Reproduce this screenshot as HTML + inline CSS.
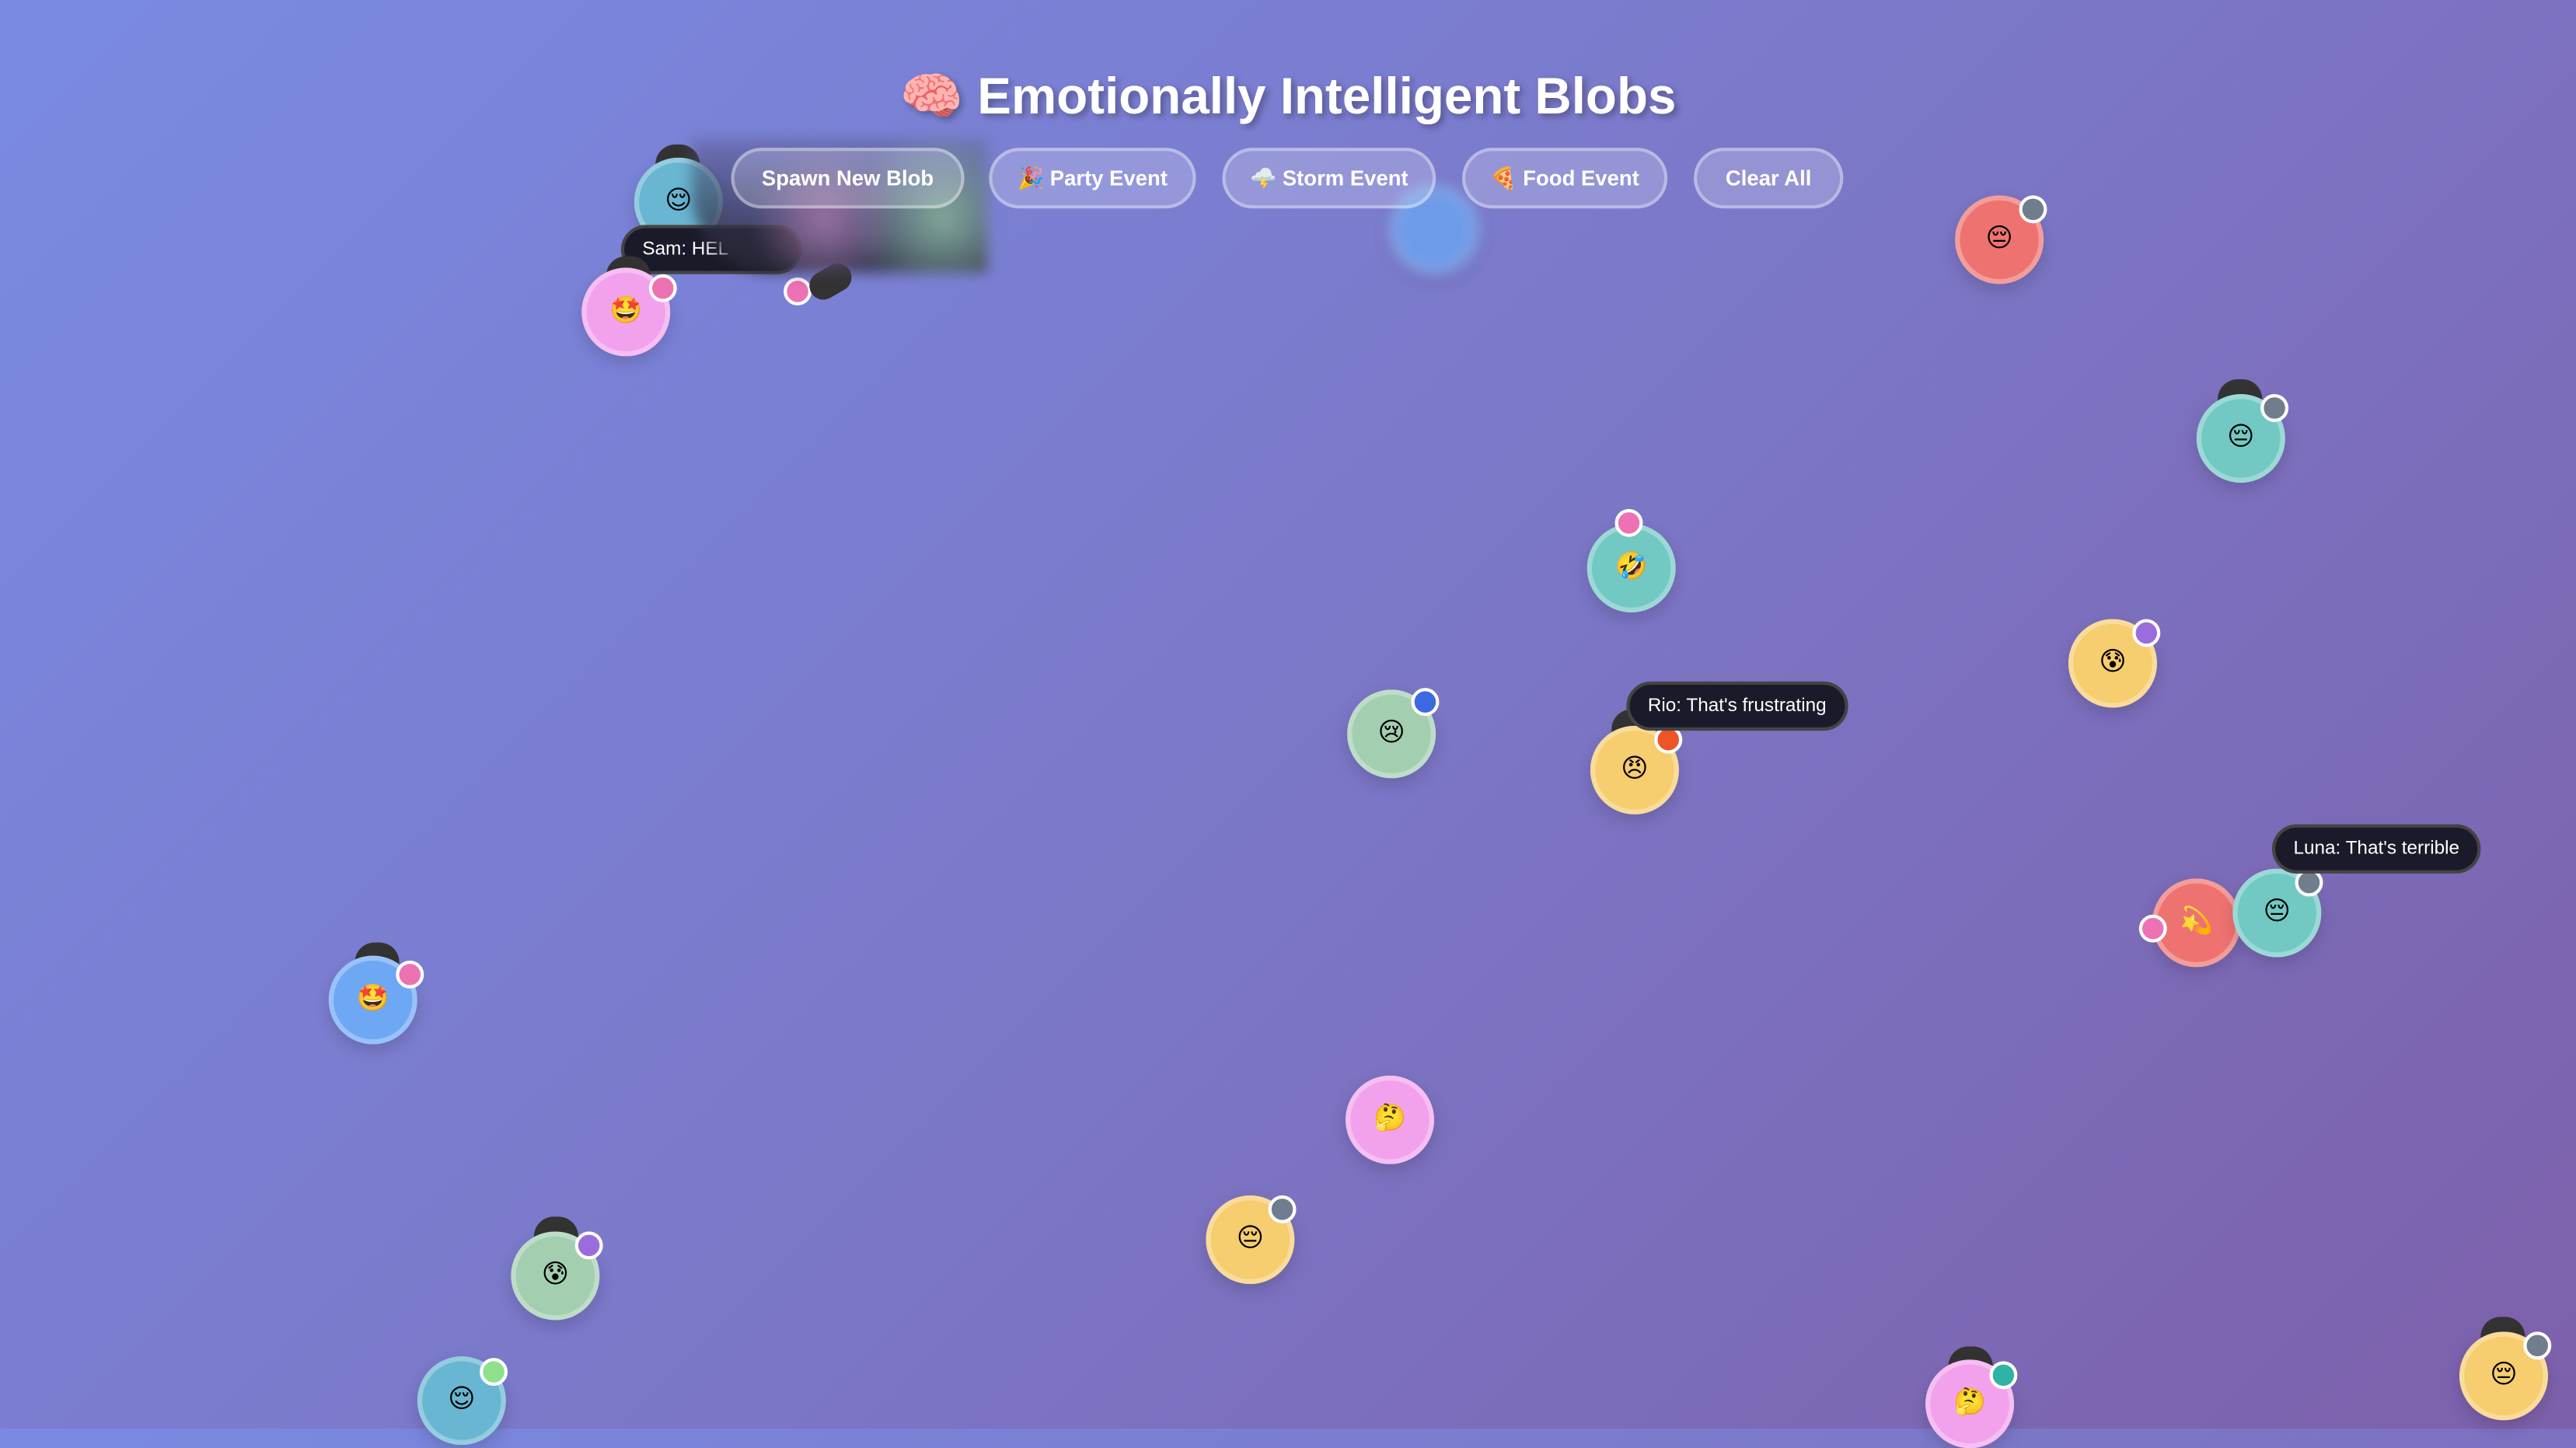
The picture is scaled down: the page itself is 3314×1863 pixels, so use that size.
<!DOCTYPE html>
<html><head><meta charset="utf-8"><style>
html,body{margin:0;padding:0;width:100%;height:100%;overflow:hidden}
html{background:linear-gradient(135deg,#7a8ae3 0%,#7b78c8 50%,#7d60ab 100%)}
body{font-family:"Liberation Sans","DejaVu Sans",sans-serif}
#bg{position:fixed;left:0;top:0;right:0;bottom:0;background:linear-gradient(135deg,#7a8ae3 0%,#7b78c8 50%,#7d60ab 100%)}
#s{position:absolute;left:0;top:0;width:1568px;height:870px;transform:scale(2.1135,2.1126);transform-origin:0 0}
h1{position:absolute;left:0;width:1568px;top:40px;margin:0;text-align:center;color:#fff;font-size:31px;font-weight:bold;text-shadow:2px 2px 4px rgba(0,0,0,.3)}
.btn{position:absolute;top:90px;height:33px;border:2px solid rgba(255,255,255,.35);background:rgba(255,255,255,.2);border-radius:20px;color:#fff;font-weight:bold;font-size:13px;line-height:33px;text-align:center;box-sizing:content-box}
.b{position:absolute;width:48px;height:48px;border-radius:50%;border:3px solid rgba(255,255,255,.3);box-shadow:0 4px 10px rgba(0,0,0,.15);text-align:center;line-height:48px;font-size:16px}
.d{position:absolute;width:13px;height:13px;border-radius:50%;border:2px solid #fff}
.h{position:absolute;width:27px;height:17px;background:#333;border-radius:12px 12px 0 0}
.sp{position:absolute;background:#1b1a2a;color:#fff;font-size:11.5px;height:30px;line-height:26px;padding:0 11px;border-radius:15px;border:2px solid #444;box-sizing:border-box;white-space:nowrap}
.blur{position:absolute;left:421px;top:84px;width:180px;height:82px;border-radius:0 0 0 50px;background:radial-gradient(circle at 45% 60%,rgba(170,120,170,.8),transparent 40%),radial-gradient(circle at 85% 60%,rgba(140,190,160,.8),transparent 35%),linear-gradient(180deg,rgba(90,90,140,.4),rgba(40,40,55,.9));filter:blur(4px)}
</style></head><body><div id="bg"></div><div id="s">
<div class="h" style="left:399px;top:88px"></div>
<div class="b" style="left:386px;top:96px;background:#68b6d2">😌</div>
<div class="sp" style="left:378px;top:137px;width:110px">Sam: HEL</div>
<div class="h" style="left:369px;top:156px"></div>
<div class="b" style="left:354px;top:163px;background:#f2a2ec">🤩</div>
<div class="d" style="left:395px;top:167px;background:#ec72b4"></div>
<div class="b" style="left:846px;top:113px;background:#6ba4f0;filter:blur(4px);opacity:.8"></div>
<div class="d" style="left:477px;top:169px;background:#ec72b4"></div>
<div class="h" style="left:492px;top:163px;transform:rotate(-30deg);border-radius:12px"></div>
<div class="blur"></div>
<h1>🧠 Emotionally Intelligent Blobs</h1>
<div class="btn" style="left:445px;width:138px">Spawn New Blob</div>
<div class="btn" style="left:602px;width:122px">🎉 Party Event</div>
<div class="btn" style="left:744px;width:126px">🌩️ Storm Event</div>
<div class="btn" style="left:890px;width:121px">🍕 Food Event</div>
<div class="btn" style="left:1031px;width:87px">Clear All</div>

<div class="b" style="left:1190px;top:119px;background:#ee7370">😔</div><div class="d" style="left:1229px;top:119px;background:#6f7d8c"></div>
<div class="h" style="left:1350px;top:231px"></div>
<div class="b" style="left:1337px;top:240px;background:#72c9c4">😔</div><div class="d" style="left:1376px;top:240px;background:#6f7d8c"></div>
<div class="b" style="left:966px;top:319px;background:#72c9c4">🤣</div><div class="d" style="left:983px;top:310px;background:#ec72b4"></div>
<div class="b" style="left:1259px;top:377px;background:#f6cd6f">😰</div><div class="d" style="left:1298px;top:377px;background:#9b6ddc"></div>
<div class="b" style="left:820px;top:420px;background:#a3cfb0">😢</div><div class="d" style="left:859px;top:419px;background:#3b6ae0"></div>
<div class="h" style="left:981px;top:432px"></div>
<div class="b" style="left:968px;top:442px;background:#f6cd6f">😠</div><div class="d" style="left:1007px;top:442px;background:#ee5428"></div>
<div class="sp" style="left:990px;top:415px">Rio: That's frustrating</div>
<div class="b" style="left:1310px;top:535px;background:#ee7370">💫</div><div class="d" style="left:1302px;top:557px;background:#ec72b4"></div>
<div class="b" style="left:1359px;top:529px;background:#72c9c4">😔</div><div class="d" style="left:1397px;top:529px;background:#6f7d8c"></div>
<div class="sp" style="left:1383px;top:502px">Luna: That's terrible</div>
<div class="h" style="left:216px;top:574px"></div>
<div class="b" style="left:200px;top:582px;background:#6ea8f5">🤩</div><div class="d" style="left:241px;top:585px;background:#ec72b4"></div>
<div class="b" style="left:819px;top:655px;background:#f2a2ec">🤔</div>
<div class="b" style="left:734px;top:728px;background:#f6cd6f">😔</div><div class="d" style="left:772px;top:728px;background:#6f7d8c"></div>
<div class="h" style="left:325px;top:741px"></div>
<div class="b" style="left:311px;top:750px;background:#a3cfb0">😰</div><div class="d" style="left:350px;top:750px;background:#9b6ddc"></div>
<div class="b" style="left:254px;top:826px;background:#68b6d2">😌</div><div class="d" style="left:292px;top:827px;background:#8fe08a"></div>
<div class="h" style="left:1186px;top:820px"></div>
<div class="b" style="left:1172px;top:828px;background:#f2a2ec">🤔</div><div class="d" style="left:1211px;top:829px;background:#2fb3a6"></div>
<div class="h" style="left:1510px;top:802px"></div>
<div class="b" style="left:1497px;top:811px;background:#f6cd6f">😔</div><div class="d" style="left:1536px;top:811px;background:#6f7d8c"></div>
</div></body></html>
